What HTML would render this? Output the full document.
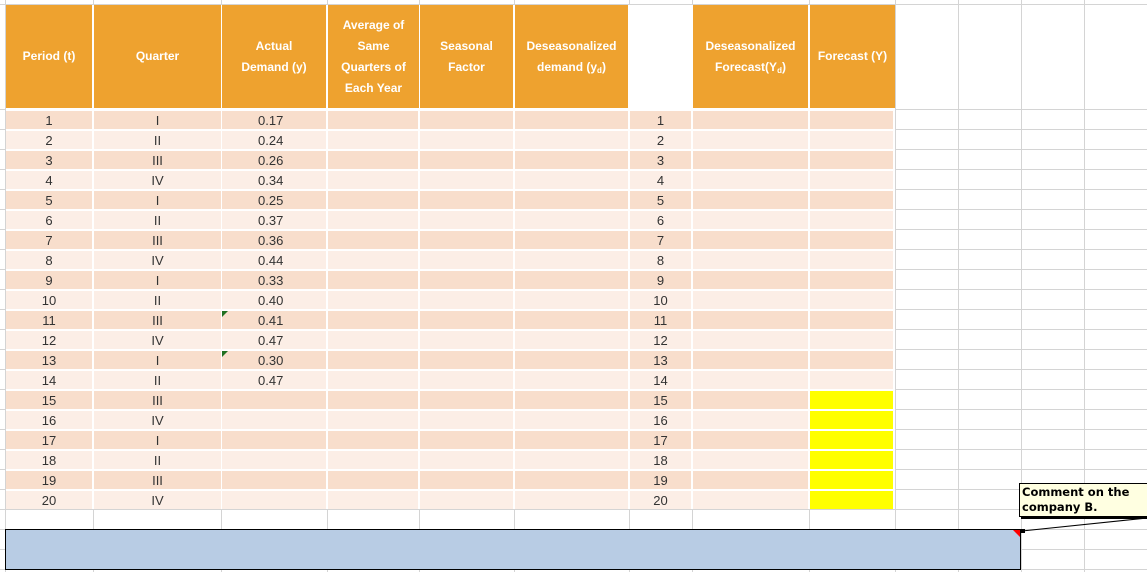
<!DOCTYPE html>
<html><head><meta charset="utf-8"><style>
*{margin:0;padding:0;box-sizing:border-box}
body{width:1147px;height:572px;overflow:hidden;position:relative;background:#fff;font-family:"Liberation Sans",sans-serif;color:#333}
.v{position:absolute;top:0;height:572px;width:1px;background:#d4d4d4}
.h{position:absolute;left:0;width:1147px;height:1px;background:#d4d4d4}
.hd{position:absolute;top:5px;height:103px;background:#EEA22F;color:#fff;font-weight:bold;font-size:12px;line-height:21px;display:flex;align-items:center;justify-content:center;text-align:center}
.r{position:absolute;left:0;width:1147px;height:18px}
.r span{position:absolute;top:0;height:18px;font-size:13px;line-height:19px;text-align:center}
.o span{background:#F8DECC}.e span{background:#FCEEE6}
.r span.y{background:#ffff00}
.a{left:6px;width:86px}.b{left:94px;width:127px}.c{left:222px;width:104px;text-align:left!important;padding-left:36px}
.d{left:328px;width:90px}.f{left:420px;width:93px}.g{left:515px;width:113px}.k{left:630px;width:61px}.l{left:693px;width:115px}.m{left:810px;width:83px}
sub{font-size:8px;vertical-align:-2px;line-height:0}
.tri{position:absolute;width:0;height:0;border-top:6px solid #207020;border-right:6px solid transparent}
</style></head><body>
<div class="v" style="left:5px"></div><div class="v" style="left:93px"></div><div class="v" style="left:221px"></div><div class="v" style="left:327px"></div><div class="v" style="left:419px"></div><div class="v" style="left:514px"></div><div class="v" style="left:629px"></div><div class="v" style="left:692px"></div><div class="v" style="left:809px"></div><div class="v" style="left:895px"></div><div class="v" style="left:958px"></div><div class="v" style="left:1021px"></div><div class="v" style="left:1084px"></div>
<div class="h" style="top:4px"></div><div class="h" style="top:109px"></div><div class="h" style="top:129px"></div><div class="h" style="top:149px"></div><div class="h" style="top:169px"></div><div class="h" style="top:189px"></div><div class="h" style="top:209px"></div><div class="h" style="top:229px"></div><div class="h" style="top:249px"></div><div class="h" style="top:269px"></div><div class="h" style="top:289px"></div><div class="h" style="top:309px"></div><div class="h" style="top:329px"></div><div class="h" style="top:349px"></div><div class="h" style="top:369px"></div><div class="h" style="top:389px"></div><div class="h" style="top:409px"></div><div class="h" style="top:429px"></div><div class="h" style="top:449px"></div><div class="h" style="top:469px"></div><div class="h" style="top:489px"></div><div class="h" style="top:509px"></div><div class="h" style="top:529px"></div><div class="h" style="top:549px"></div><div class="h" style="top:569px"></div>
<div style="position:absolute;left:6px;top:5px;width:889px;height:504px;background:#fff"></div>
<div class="hd" style="left:6px;width:86px"><div>Period (t)</div></div>
<div class="hd" style="left:94px;width:127px"><div>Quarter</div></div>
<div class="hd" style="left:222px;width:104px"><div>Actual<br>Demand (y)</div></div>
<div class="hd" style="left:328px;width:91px"><div>Average of<br>Same<br>Quarters of<br>Each Year</div></div>
<div class="hd" style="left:420px;width:93px"><div>Seasonal<br>Factor</div></div>
<div class="hd" style="left:515px;width:113px"><div>Deseasonalized<br>demand (y<sub>d</sub>)</div></div>
<div class="hd" style="left:693px;width:115px"><div>Deseasonalized<br>Forecast(Y<sub>d</sub>)</div></div>
<div class="hd" style="left:810px;width:85px"><div>Forecast (Y)</div></div>

<div class="r o" style="top:111px"><span class="a">1</span><span class="b">I</span><span class="c">0.17</span><span class="d"></span><span class="f"></span><span class="g"></span><span class="k">1</span><span class="l"></span><span class="m"></span></div>
<div class="r e" style="top:131px"><span class="a">2</span><span class="b">II</span><span class="c">0.24</span><span class="d"></span><span class="f"></span><span class="g"></span><span class="k">2</span><span class="l"></span><span class="m"></span></div>
<div class="r o" style="top:151px"><span class="a">3</span><span class="b">III</span><span class="c">0.26</span><span class="d"></span><span class="f"></span><span class="g"></span><span class="k">3</span><span class="l"></span><span class="m"></span></div>
<div class="r e" style="top:171px"><span class="a">4</span><span class="b">IV</span><span class="c">0.34</span><span class="d"></span><span class="f"></span><span class="g"></span><span class="k">4</span><span class="l"></span><span class="m"></span></div>
<div class="r o" style="top:191px"><span class="a">5</span><span class="b">I</span><span class="c">0.25</span><span class="d"></span><span class="f"></span><span class="g"></span><span class="k">5</span><span class="l"></span><span class="m"></span></div>
<div class="r e" style="top:211px"><span class="a">6</span><span class="b">II</span><span class="c">0.37</span><span class="d"></span><span class="f"></span><span class="g"></span><span class="k">6</span><span class="l"></span><span class="m"></span></div>
<div class="r o" style="top:231px"><span class="a">7</span><span class="b">III</span><span class="c">0.36</span><span class="d"></span><span class="f"></span><span class="g"></span><span class="k">7</span><span class="l"></span><span class="m"></span></div>
<div class="r e" style="top:251px"><span class="a">8</span><span class="b">IV</span><span class="c">0.44</span><span class="d"></span><span class="f"></span><span class="g"></span><span class="k">8</span><span class="l"></span><span class="m"></span></div>
<div class="r o" style="top:271px"><span class="a">9</span><span class="b">I</span><span class="c">0.33</span><span class="d"></span><span class="f"></span><span class="g"></span><span class="k">9</span><span class="l"></span><span class="m"></span></div>
<div class="r e" style="top:291px"><span class="a">10</span><span class="b">II</span><span class="c">0.40</span><span class="d"></span><span class="f"></span><span class="g"></span><span class="k">10</span><span class="l"></span><span class="m"></span></div>
<div class="r o" style="top:311px"><span class="a">11</span><span class="b">III</span><span class="c">0.41</span><span class="d"></span><span class="f"></span><span class="g"></span><span class="k">11</span><span class="l"></span><span class="m"></span></div>
<div class="r e" style="top:331px"><span class="a">12</span><span class="b">IV</span><span class="c">0.47</span><span class="d"></span><span class="f"></span><span class="g"></span><span class="k">12</span><span class="l"></span><span class="m"></span></div>
<div class="r o" style="top:351px"><span class="a">13</span><span class="b">I</span><span class="c">0.30</span><span class="d"></span><span class="f"></span><span class="g"></span><span class="k">13</span><span class="l"></span><span class="m"></span></div>
<div class="r e" style="top:371px"><span class="a">14</span><span class="b">II</span><span class="c">0.47</span><span class="d"></span><span class="f"></span><span class="g"></span><span class="k">14</span><span class="l"></span><span class="m"></span></div>
<div class="r o" style="top:391px"><span class="a">15</span><span class="b">III</span><span class="c"></span><span class="d"></span><span class="f"></span><span class="g"></span><span class="k">15</span><span class="l"></span><span class="m y"></span></div>
<div class="r e" style="top:411px"><span class="a">16</span><span class="b">IV</span><span class="c"></span><span class="d"></span><span class="f"></span><span class="g"></span><span class="k">16</span><span class="l"></span><span class="m y"></span></div>
<div class="r o" style="top:431px"><span class="a">17</span><span class="b">I</span><span class="c"></span><span class="d"></span><span class="f"></span><span class="g"></span><span class="k">17</span><span class="l"></span><span class="m y"></span></div>
<div class="r e" style="top:451px"><span class="a">18</span><span class="b">II</span><span class="c"></span><span class="d"></span><span class="f"></span><span class="g"></span><span class="k">18</span><span class="l"></span><span class="m y"></span></div>
<div class="r o" style="top:471px"><span class="a">19</span><span class="b">III</span><span class="c"></span><span class="d"></span><span class="f"></span><span class="g"></span><span class="k">19</span><span class="l"></span><span class="m y"></span></div>
<div class="r e" style="top:491px"><span class="a">20</span><span class="b">IV</span><span class="c"></span><span class="d"></span><span class="f"></span><span class="g"></span><span class="k">20</span><span class="l"></span><span class="m y"></span></div>

<div class="tri" style="left:222px;top:311px"></div>
<div class="tri" style="left:222px;top:351px"></div>

<div style="position:absolute;left:5px;top:529px;width:1016px;height:41px;background:#B8CCE4;border:1px solid #000"></div>
<div style="position:absolute;left:1013px;top:530px;width:0;height:0;border-top:7px solid #f00;border-left:7px solid transparent"></div>
<svg style="position:absolute;left:0;top:0" width="1147" height="572"><line x1="1022" y1="531" x2="1147" y2="518" stroke="#000" stroke-width="1"/><rect x="1021" y="529" width="4" height="4" fill="#000"/></svg>
<div style="position:absolute;left:1019px;top:483px;width:140px;height:34px;background:#FFFFE1;border:1px solid #000;box-shadow:2px 2px 0 #000;font-family:'DejaVu Sans',sans-serif;font-weight:bold;font-size:11.5px;line-height:15px;color:#000;padding:1px 2px">Comment on the<br>company B.</div>
</body></html>
